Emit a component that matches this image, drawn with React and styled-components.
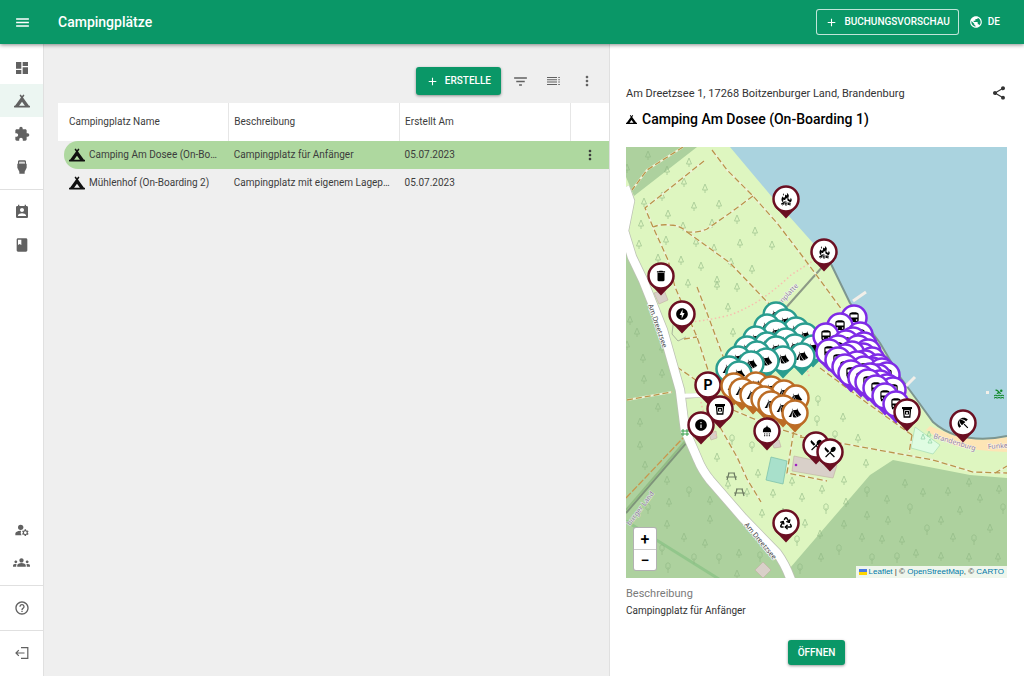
import styled, { createGlobalStyle, css } from "styled-components";
import {
   MdAdd, MdBeachAccess, MdBook, MdDashboard, MdDelete, MdDirectionsBus, MdExtension,
   MdFilterList, MdGroups, MdHelpOutline, MdInfo, MdManageAccounts, MdMenu, MdMoreVert,
   MdOfflineBolt, MdPermContactCalendar, MdPool, MdPublic, MdRestaurantMenu,
   MdSettingsInputHdmi, MdShare, MdShower
} from "react-icons/md";
import { FaCampground } from "react-icons/fa";
import { GiCampfire, GiCampingTent } from "react-icons/gi";
import { Recycle } from "lucide-react";

const GlobalStyle = createGlobalStyle`
*{box-sizing:border-box;}
body{
margin:0;
background:#fff;
color:#212121;
font-family:Roboto, "Liberation Sans", sans-serif;
}
button{font-family:inherit;}
`

const Page = styled.div`
min-height:100vh;
display:flex;
flex-direction:column;
`
const TopBar = styled.header`
position:relative;
z-index:2;
display:flex;
align-items:center;
height:44px;
padding-right:24px;
background:#0a9767;
color:#fff;
box-shadow:0 1px 4px rgba(0,0,0,.45);
`
const PageTitle = styled.h1`
flex:1;
margin:0 0 0 14px;
font-size:14px;
font-weight:500;
line-height:20px;
`
const IconButton = styled.button`
display:inline-flex;
align-items:center;
justify-content:center;
width:${p => p.$width || 33}px;
height:${p => p.$height || 28}px;
padding:0;
border:0;
background:none;
color:inherit;
cursor:pointer;
`
const Button = styled.button`
display:inline-flex;
align-items:center;
justify-content:center;
gap:6px;
padding:0 10px;
border:0;
border-radius:3px;
background:#0a9767;
color:#fff;
font-size:10px;
font-weight:500;
line-height:16px;
text-transform:uppercase;
cursor:pointer;
${p => p.$outlined ? css`
height:26px;
padding:0 8px;
border:1px solid rgba(255,255,255,.75);
` : css`
height:${p.$tall ? 28 : 25}px;
box-shadow:0 1px 3px rgba(0,0,0,.4);
`}
`
const LanguageButton = styled.button`
display:inline-flex;
align-items:center;
gap:5px;
height:26px;
margin-left:10px;
padding:0;
border:0;
background:none;
color:#fff;
font-size:10px;
font-weight:500;
line-height:16px;
cursor:pointer;
`

const Body = styled.div`
flex:1;
display:flex;
`
const SideBar = styled.nav`
flex:0 0 44px;
display:flex;
flex-direction:column;
padding:7px 0;
border-right:1px solid #e0e0e0;
`
const SideLink = styled.a`
display:flex;
align-items:center;
justify-content:center;
height:33px;
color:#616161;
background:${p => p.$active ? "#ecf6f2" : "none"};
`
const SideDivider = styled.hr`
width:100%;
margin:6px 0 5px;
border:0;
border-top:1px solid #e0e0e0;
`
const SideSpacer = styled.div`
flex:1;
`

const ListPane = styled.main`
flex:1;
min-width:0;
padding:23px 0 0 14px;
background:#efefef;
`
const Toolbar = styled.div`
display:flex;
align-items:center;
justify-content:flex-end;
margin-bottom:8px;
padding-right:6px;
color:#616161;
`
const ToolbarIcons = styled.div`
display:flex;
margin-left:3px;
`
const Table = styled.table`
width:100%;
table-layout:fixed;
border-collapse:collapse;
font-size:10px;
line-height:16px;
color:#3c3c3c;
`
const HeadCell = styled.th`
width:${p => p.$width || "auto"};
height:38px;
padding:0 6px 0 ${p => p.$first ? 11 : 5}px;
background:#fff;
border-right:1px solid #e6e6e6;
font-weight:400;
text-align:left;
&:last-child{border-right:0;}
`
const Row = styled.tr`
--row:${p => p.$selected ? "#aed89f" : "transparent"};
`
const Cell = styled.td`
height:28px;
padding:0 8px 0 5px;
background:var(--row);
overflow:hidden;
white-space:nowrap;
text-overflow:ellipsis;
`
const NameCell = styled(Cell)`
padding:0 0 0 6px;
background:none;
`
const Name = styled.div`
display:flex;
align-items:center;
gap:4px;
height:28px;
padding:0 10px 0 5px;
border-radius:14px 0 0 14px;
background:var(--row);
svg{flex:none;color:#111;}
`
const Ellipsis = styled.span`
overflow:hidden;
text-overflow:ellipsis;
`
const MenuCell = styled(Cell)`
padding:0;
text-align:center;
vertical-align:middle;
line-height:0;
`

const DetailPane = styled.aside`
flex:0 0 415px;
display:flex;
flex-direction:column;
padding:40px 17px 11px 16px;
border-left:1px solid #e0e0e0;
`
const AddressRow = styled.div`
display:flex;
align-items:center;
justify-content:space-between;
height:18px;
font-size:11px;
color:#333;
`
const DetailTitle = styled.h2`
display:flex;
align-items:center;
gap:5px;
margin:7px 0 18px;
font-size:14px;
font-weight:500;
line-height:20px;
color:#000;
`
const MapBox = styled.div`
position:relative;
height:431px;
overflow:hidden;
background:#def6c0;
`
const MapDrawing = styled.svg`
display:block;
width:100%;
height:100%;
font-family:"Noto Sans", sans-serif;
`
const ZoomControl = styled.div`
position:absolute;
left:7px;
bottom:7px;
display:flex;
flex-direction:column;
border:1px solid rgba(0,0,0,.3);
border-radius:3px;
background:#fff;
`
const ZoomButton = styled.button`
width:22px;
height:21px;
padding:2px 0 0;
border:0;
background:none;
color:#000;
font-size:16px;
font-weight:500;
line-height:18px;
cursor:pointer;
& + &{border-top:1px solid #ccc;}
`
const Attribution = styled.div`
position:absolute;
right:0;
bottom:0;
display:flex;
align-items:center;
gap:2px;
height:12px;
padding:0 3px;
background:rgba(255,255,255,.8);
font-family:"Liberation Sans", sans-serif;
font-size:8px;
line-height:12px;
color:#333;
a{color:#0078a8;text-decoration:none;}
`
const DescriptionLabel = styled.h3`
margin:8px 0 0;
font-size:11px;
font-weight:400;
line-height:16px;
color:#7a7a7a;
`
const Description = styled.p`
margin:0 0 20px;
font-size:10px;
line-height:18px;
color:#333;
`
const DetailActions = styled.div`
display:flex;
justify-content:center;
`

const DensityIcon = () => (
   <svg width="14" height="14" viewBox="0 0 14 14" fill="currentColor" aria-hidden="true">
      <path d="M0 3h10v1H0zM0 5.300h10v1H0zM0 7.600h10v1H0zM0 9.900h10v1H0zM11.300 3h1.500v1h-1.500zM11.300 5.300h1.500v1h-1.500zM11.300 7.600h1.500v1h-1.500zM11.300 9.900h1.500v1h-1.500z" />
   </svg>
)

const LogoutIcon = () => (
   <svg width="14" height="14" viewBox="0 0 14 14" fill="none" stroke="currentColor" strokeWidth="1.200" aria-hidden="true">
      <path d="M6 1.600h6.800v10.800H6M9.500 7H1M3.800 4.200 1 7l2.800 2.800" />
   </svg>
)

const topLinks = [
   { label: "Dashboard", Icon: MdDashboard },
   { label: "Campingplätze", Icon: FaCampground, active: true },
   { label: "Erweiterungen", Icon: MdExtension },
   { label: "Anschlüsse", Icon: MdSettingsInputHdmi },
]

const camps = [
   { name: "Camping Am Dosee (On-Boarding 1)", text: "Campingplatz für Anfänger", date: "05.07.2023", selected: true },
   { name: "Mühlenhof (On-Boarding 2)", text: "Campingplatz mit eigenem Lageplan", date: "05.07.2023" },
]

const firs = [
   [22, 8], [1, 21], [41, 23], [63, 15], [58, 35], [79, 41], [36, 49], [18, 55], [42, 67], [68, 59], [93, 57], [111, 72],
   [57, 79], [15, 77], [13, 97], [129, 84], [40, 93], [70, 95], [114, 96], [146, 98], [88, 101], [105, 115], [32, 111],
   [55, 113], [75, 119], [126, 122], [91, 133], [86, 76], [111, 140], [91, 138], [102, 160], [62, 136], [4, 173],
   [11, 185], [1, 198], [17, 211], [36, 201], [18, 232], [36, 226], [107, 185], [14, 275], [14, 298], [32, 260],
   [217, 270], [232, 291], [19, 318], [41, 333], [43, 355], [84, 353], [41, 377], [58, 390], [79, 396], [113, 406],
   [84, 372], [111, 427], [91, 310], [102, 337], [121, 345], [132, 326], [147, 346], [166, 334], [176, 350], [196, 342],
   [218, 333], [240, 316], [136, 366], [157, 365], [179, 376], [220, 355], [218, 377], [261, 352], [241, 368],
   [279, 336], [297, 345], [322, 344], [343, 335], [354, 351], [373, 342], [262, 373], [236, 390], [195, 410],
   [194, 387], [256, 392], [290, 406], [276, 393], [315, 373], [334, 363], [327, 390], [315, 409], [343, 410],
   [372, 410], [364, 381],
]
const leafTrees = [
   [106, 293], [126, 300], [192, 254], [191, 274], [209, 289], [63, 345], [22, 362], [36, 403], [68, 412], [93, 412],
   [42, 421], [134, 410], [171, 394], [200, 362], [241, 345], [284, 362], [213, 403], [174, 422], [246, 412],
   [271, 411], [301, 383], [377, 362], [348, 393],
]

const footpaths = [
   "M57 0 21 23 6 43",
   "M78 14 19 61 27 80 42 113 49 140 71 190 82 223",
   "M86 3 101 23 127 49 151 76 174 106 194 133 216 163",
   "M127 49 104 66 81 82Q72 86 61 85Q54 78 44 78Q34 77 27 80",
   "M61 85 104 116 127 140 144 158",
   "M71 140 81 166 101 220",
   "M1 253 46 245",
   "M51 220 74 236",
   "M107 263 147 280 176 289",
   "M169 276 161 326 201 334",
   "M94 280 111 310 121 332 135 355",
   "M194 221 241 256 286 288",
   "M174 290 214 296 307 313 347 325 381 326",
   "M286 288 283 306",
   "M369 326 381 319",
   "M174 216 190 213 200 206",
   "M58 192 71 190",
]

const ROAD = "M-1 40 4 54-2 84 6 110 17 133 37 183 54 243 59 283 72 313Q76 323 84 333L117 371 151 406Q160 418 166 436"

// colours of the pin groups
const kinds = {
   facility: "#6b0f22",
   tent: "#2a9d8f",
   orange: "#bc6c25",
   camper: "#7f2be6",
}

const CupIcon = props => (
   <svg {...props} width="12" height="12" viewBox="0 0 12 12">
      <path d="M1 1h10v2H1z" fill="#000" />
      <path d="M2.500 3.500h7l-.7 7.500H3.200z" fill="none" stroke="#000" strokeWidth="1.300" />
      <path d="M4 5h4v3.500H4z" fill="#000" />
      <circle cx="6" cy="7" r="1" fill="#fff" />
   </svg>
)

const facilityPins = [
   [160, 52, GiCampfire], [198, 105, GiCampfire], [35, 129, MdDelete], [56, 167, MdOfflineBolt],
   [82, 238, null], [94, 262, CupIcon], [75, 278, MdInfo], [141, 284, MdShower], [190, 298, MdRestaurantMenu],
   [204, 305, MdRestaurantMenu], [160, 376, Recycle], [281, 265, CupIcon], [337, 276, MdBeachAccess],
]
const tentPins = [
   [150, 168], [159, 175], [141, 180], [170, 183], [150, 186], [130, 192], [179, 189], [160, 194], [141, 198],
   [121, 202], [169, 200], [150, 202], [187, 201], [131, 207], [112, 212], [176, 209], [157, 212], [140, 214],
   [125, 217], [103, 222], [113, 227],
]
const orangePins = [
   [108, 239], [130, 238], [145, 242], [158, 246], [170, 251], [116, 244], [127, 248], [138, 252], [145, 257],
   [157, 261], [169, 266],
]
const camperPins = [
   [228, 171], [214, 179], [200, 189], [234, 188], [227, 193], [220, 196], [238, 198], [232, 201], [212, 201],
   [242, 205], [237, 209], [226, 207], [219, 210], [203, 205], [246, 213], [239, 216], [231, 217], [212, 213],
   [252, 220], [246, 223], [238, 222], [219, 220], [256, 224], [261, 228], [252, 230], [244, 229], [225, 226],
   [235, 231], [254, 236], [261, 240], [242, 235], [267, 243], [250, 241], [259, 249], [270, 257],
]

const Pin = ({ x, y, kind, Icon }) => (
   <g transform={`translate(${x} ${y})`}>
      <path d="M-10.500 8.500 0 19.500 10.500 8.500z" fill={kinds[kind]} />
      <circle r="12.500" fill="#fff" stroke={kinds[kind]} strokeWidth="2.500" />
      {Icon
         ? <Icon x={Icon === CupIcon ? -6 : -7} y={Icon === CupIcon ? -6 : -7} size={14} color="#000" strokeWidth={Icon === Recycle ? 2.5 : 0} />
         : <text y="5" textAnchor="middle" fontSize="14" fontWeight="700" fontFamily="Roboto">P</text>}
   </g>
)

const CampMap = () => (
   <MapDrawing viewBox="0 0 381 431" preserveAspectRatio="xMidYMid slice" role="img" aria-label="Lageplan">
      <rect width="381" height="431" fill="#def6c0" />
      <path d="M0 0H71L8 49 0 30z" fill="#add19e" />
      <path d="M0 85 17 133 37 183 54 243 59 283 72 313 84 333 117 371 166 431H0z" fill="#add19e" />
      <path d="M267 313 344 328 381 331V431H160L164 421 207 371 244 328z" fill="#add19e" />
      <path d="M304 279 324 287 354 293 381 290V305Q350 304 330 299 312 292 300 283z" fill="#fde5b5" />
      <path d="M104 0 146 50 187 96 207 120 224 156 254 196 274 230 291 253 307 275Q317 284 330 288 354 295 381 289V0z" fill="#aad3df" />
      <path d="M205 117 224 156 254 196 274 230 291 253 307 275Q317 284 330 288 354 295 381 289" fill="none" stroke="#7d9690" strokeWidth="2" />
      <path d="M198 118 157 164" stroke="#8d9a86" strokeWidth="2" />
      <path d="M227 154 240 145M280 239 289 230" stroke="#f2efe9" strokeWidth="3" />
      <rect x="360" y="244" width="3" height="3" fill="#f2efe9" />
      <path d="M0 374 96 434" stroke="#92c68b" strokeWidth="3" />
      <path d="M289 280 314 298 307 307 285 301z" fill="#dffce2" stroke="#a5dcb5" strokeWidth=".7" />
      <path d="M145 310 161 314 157 337 140 333z" fill="#a8e0cb" stroke="#75bda8" strokeWidth=".7" />
      <g fill="#d9d0c9" stroke="#bfae9f" strokeWidth=".6">
         <path d="M168 309 211 318 207 331 166 324z" />
         <path d="M137 415 145 423 137 431 129 423z" />
         <path d="M28 146 38 143 42 153 33 157zM83 287 90 284 91 291 85 293zM145 293 153 293 155 300 148 301z" />
      </g>
      <circle cx="170" cy="318" r="1.300" fill="#a020c0" />

      <g fill="none" stroke="#8fb884" strokeWidth=".8" opacity=".75">
         {firs.map(([x, y]) => (
            <path key={`${x}-${y}`} d={`M${x} ${y - 4}l-2.500 6h5zM${x} ${y + 2}v3`} />
         ))}
         {leafTrees.map(([x, y]) => (
            <path key={`${x}-${y}`} d={`M${x - 2} ${y - 2}a2.200 2.200 0 1 1 4 0a2.200 2.200 0 1 1-4 0M${x} ${y - 1}v6`} />
         ))}
         <path d="M297 287l-2 5h4zM303 284l-2 5h4zM304 292l-2 4h4z" stroke="#7cc99a" />
      </g>

      <path d="M0 366 61 295" stroke="#7e947a" strokeWidth="2" />
      <path d="M0 363 61 292" stroke="#93bd85" strokeWidth="2" />
      <path d="M0 351 58 290" stroke="#c9964c" strokeWidth="1.300" strokeDasharray="7 2" />
      <path d="M57 176Q85 173 104 168 133 158 165 128L190 112M183 229 178 212" fill="none" stroke="#f6bfae" strokeWidth="1.500" strokeDasharray="1.500 2.500" />
      <path d="M75 255Q78 272 91 290" fill="none" stroke="#f6bfae" strokeWidth="1.500" strokeDasharray="1.500 2.500" />
      <path d="M48 170 46 187 52 194 60 190" fill="none" stroke="#a9b59c" strokeWidth="1" />
      <g fill="none" stroke="#eef3d8" strokeWidth="2">
         {footpaths.map(d => <path key={d} d={d} />)}
      </g>
      <g fill="none" stroke="#b9954a" strokeWidth="1.300" strokeDasharray="6 3">
         {footpaths.map(d => <path key={d} d={d} />)}
      </g>

      <path d="M55 250 74 248" stroke="#c8c8c0" strokeWidth="5" />
      <path d={ROAD} fill="none" stroke="#bcc2b4" strokeWidth="10" />
      <path d={ROAD} fill="none" stroke="#fff" strokeWidth="8.500" />
      <path d="M52 249 74 248" stroke="#fff" strokeWidth="4" />
      <path d="M55 284h8M55 287h8M57 282v7M61 282v7" stroke="#35a04a" strokeWidth="1" />
      <g fill="none" stroke="#6d7b62" strokeWidth="1.200">
         <path d="M102 326h7M100 330h11M103 326l-2 7M108 326l2 7" />
         <path d="M110 342h7M108 346h11M111 342l-2 7M116 342l2 7" />
      </g>
      <MdPool x="367" y="241" size={12} color="#128a2c" />

      <g fill="#444" fontSize="7" stroke="#fff" strokeWidth="1.500" paintOrder="stroke" strokeLinejoin="round">
         <text transform="translate(22 158) rotate(71)">Am Dreetzsee</text>
         <text transform="translate(118 378) rotate(50)">Am Dreetzsee</text>
      </g>
      <g fill="#8d7a9e" fontSize="7" stroke="#fff" strokeWidth="1" strokeOpacity=".7" paintOrder="stroke">
         <text transform="translate(154 159) rotate(-47)">enplatte</text>
         <text transform="translate(4 379) rotate(-53)">burger Land</text>
         <text transform="translate(307 291) rotate(17)">Brandenburg</text>
         <text transform="translate(362 302) rotate(-4)">Funke</text>
      </g>

      {tentPins.map(([x, y]) => <Pin key={`${x}-${y}`} x={x} y={y} kind="tent" Icon={GiCampingTent} />)}
      {camperPins.map(([x, y]) => <Pin key={`${x}-${y}`} x={x} y={y} kind="camper" Icon={MdDirectionsBus} />)}
      {facilityPins.slice(0, 5).map(([x, y, Icon]) => <Pin key={`${x}-${y}`} x={x} y={y} kind="facility" Icon={Icon} />)}
      {orangePins.map(([x, y]) => <Pin key={`${x}-${y}`} x={x} y={y} kind="orange" Icon={GiCampingTent} />)}
      {facilityPins.slice(5).map(([x, y, Icon]) => <Pin key={`${x}-${y}`} x={x} y={y} kind="facility" Icon={Icon} />)}
   </MapDrawing>
)

export default function App() {
   return (
      <>
         <GlobalStyle />
         <Page>
            <TopBar>
               <IconButton $width={44} $height={44} aria-label="Menü"><MdMenu size={17} /></IconButton>
               <PageTitle>Campingplätze</PageTitle>
               <Button $outlined><MdAdd size={13} />Buchungsvorschau</Button>
               <LanguageButton><MdPublic size={14} />DE</LanguageButton>
            </TopBar>
            <Body>
               <SideBar aria-label="Hauptmenü">
                  {topLinks.map(({ label, Icon, active }) => (
                     <SideLink key={label} href="#" aria-label={label} $active={active}><Icon size={16} /></SideLink>
                  ))}
                  <SideDivider />
                  <SideLink href="#" aria-label="Buchungen"><MdPermContactCalendar size={16} /></SideLink>
                  <SideLink href="#" aria-label="Handbuch"><MdBook size={16} /></SideLink>
                  <SideSpacer />
                  <SideLink href="#" aria-label="Konto"><MdManageAccounts size={16} /></SideLink>
                  <SideLink href="#" aria-label="Benutzer"><MdGroups size={17} /></SideLink>
                  <SideDivider />
                  <SideLink href="#" aria-label="Hilfe"><MdHelpOutline size={16} /></SideLink>
                  <SideDivider />
                  <SideLink href="#" aria-label="Abmelden"><LogoutIcon /></SideLink>
               </SideBar>
               <ListPane>
                  <Toolbar>
                     <Button $tall><MdAdd size={13} />Erstelle</Button>
                     <ToolbarIcons>
                        <IconButton aria-label="Filter"><MdFilterList size={17} /></IconButton>
                        <IconButton aria-label="Zeilenhöhe"><DensityIcon /></IconButton>
                        <IconButton aria-label="Mehr"><MdMoreVert size={16} /></IconButton>
                     </ToolbarIcons>
                  </Toolbar>
                  <Table>
                     <thead>
                        <tr>
                           <HeadCell $width="31%" $first>Campingplatz Name</HeadCell>
                           <HeadCell $width="31%">Beschreibung</HeadCell>
                           <HeadCell $width="31%">Erstellt Am</HeadCell>
                           <HeadCell aria-label="Aktionen" />
                        </tr>
                     </thead>
                     <tbody>
                        {camps.map(camp => (
                           <Row key={camp.name} $selected={camp.selected}>
                              <NameCell>
                                 <Name><FaCampground size={16} /><Ellipsis>{camp.name}</Ellipsis></Name>
                              </NameCell>
                              <Cell>{camp.text}</Cell>
                              <Cell>{camp.date}</Cell>
                              <MenuCell>
                                 {camp.selected && <IconButton $width={16} aria-label="Optionen"><MdMoreVert size={16} /></IconButton>}
                              </MenuCell>
                           </Row>
                        ))}
                     </tbody>
                  </Table>
               </ListPane>
               <DetailPane>
                  <AddressRow>
                     Am Dreetzsee 1, 17268 Boitzenburger Land, Brandenburg
                     <IconButton $width={16} $height={16} aria-label="Teilen"><MdShare size={16} /></IconButton>
                  </AddressRow>
                  <DetailTitle><FaCampground size={11} />Camping Am Dosee (On-Boarding 1)</DetailTitle>
                  <MapBox>
                     <CampMap />
                     <ZoomControl>
                        <ZoomButton aria-label="Vergrößern">+</ZoomButton>
                        <ZoomButton aria-label="Verkleinern">−</ZoomButton>
                     </ZoomControl>
                     <Attribution>
                        <svg width="8" height="6" viewBox="0 0 8 6" aria-hidden="true">
                           <path fill="#4c7be1" d="M0 0h8v3H0z" />
                           <path fill="#ffd500" d="M0 3h8v3H0z" />
                        </svg>
                        <span>
                           <a href="#">Leaflet</a> | © <a href="#">OpenStreetMap</a>, © <a href="#">CARTO</a>
                        </span>
                     </Attribution>
                  </MapBox>
                  <DescriptionLabel>Beschreibung</DescriptionLabel>
                  <Description>Campingplatz für Anfänger</Description>
                  <DetailActions><Button>Öffnen</Button></DetailActions>
               </DetailPane>
            </Body>
         </Page>
      </>
   )
}
